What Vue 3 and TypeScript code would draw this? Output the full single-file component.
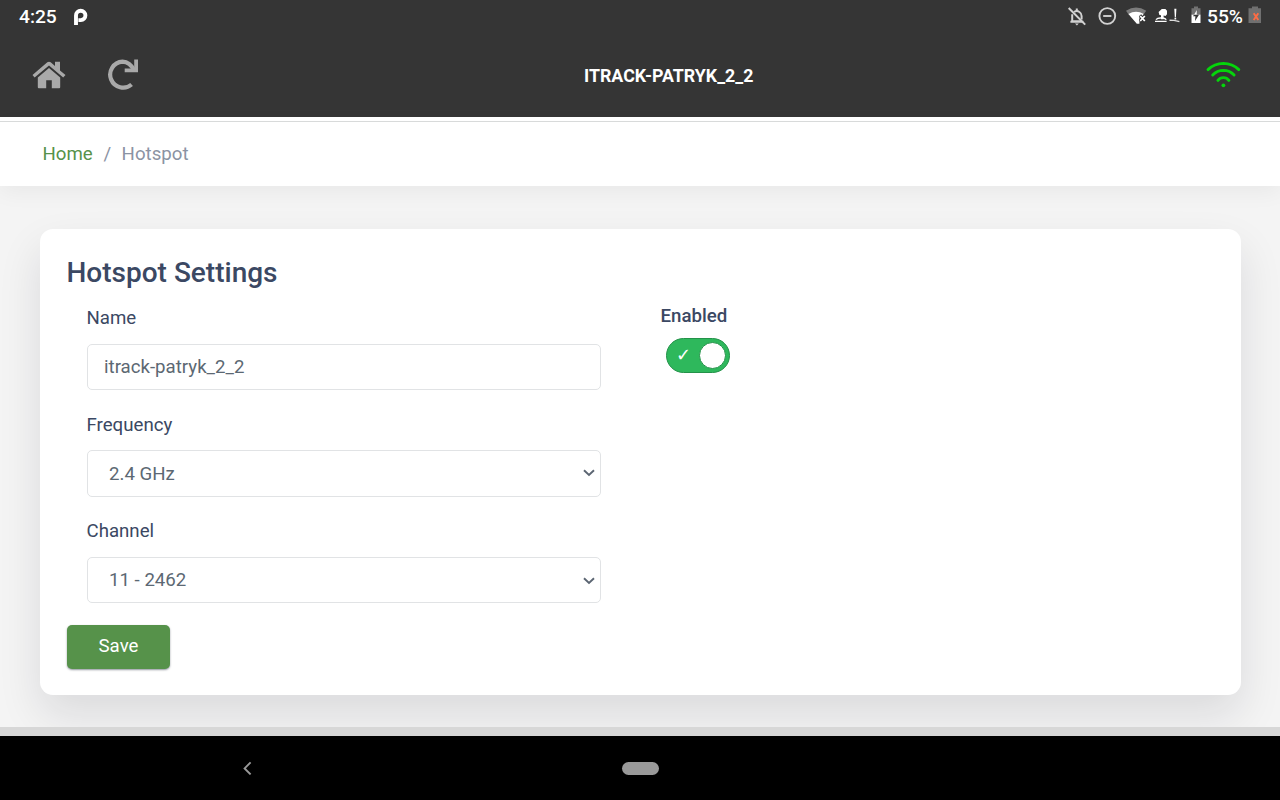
<script setup lang="ts">
import { ref } from 'vue'

const deviceName = 'ITRACK-PATRYK_2_2'

const name = ref('itrack-patryk_2_2')
const frequency = ref('2.4 GHz')
const channel = ref('11 - 2462')
const enabled = ref(true)

const frequencies = ['2.4 GHz', '5 GHz']
const channels = ['1 - 2412', '6 - 2437', '11 - 2462']
</script>

<template>
  <div class="screen">
    <header class="top">
      <div class="status">
        <span class="clock">4:25</span>
        <svg class="p-icon" width="16" height="20" viewBox="0 0 16 20">
          <path d="M4 18V8.4a4.7 4.7 0 1 1 4.8 4.7H6.4" fill="none" stroke="#fff" stroke-width="3.9" />
        </svg>
        <div class="indicators">
          <svg class="bell" width="20" height="20" viewBox="0 0 20 20" fill="none" stroke="#d2d2d2" stroke-width="2">
            <path d="M5.2 7.2V14.2H15M3.4 14.8H16.4M7.2 5Q9.7 3.1 12.4 5Q14.6 6.4 14.6 9V12.4M9.8 4V1.4" />
            <path d="M1.7 1L18.2 17.6" />
            <path d="M8 16.6h3.8l-1.9 2z" fill="#d2d2d2" stroke="none" />
          </svg>
          <svg class="dnd" width="20" height="20" viewBox="0 0 20 20" fill="none" stroke="#d2d2d2" stroke-width="1.9">
            <circle cx="10.3" cy="9" r="7.9" />
            <path d="M6.2 9h8.2" />
          </svg>
          <svg class="net" width="21" height="18" viewBox="0 0 21 18">
            <path d="M0 3.8Q10 -2.6 20.2 3.8L17.8 7.2H2.4Z" fill="#7c7c7c" />
            <path d="M2.4 7Q10 2.6 17.8 7L16.6 9H13.4V16.8H10.8Z" fill="#fff" />
            <path d="M14 8.2l5 6M19 8.2l-5 6" stroke="#353535" stroke-width="3" />
            <path d="M14.2 9l4.6 5M18.8 9l-4.6 5" stroke="#fff" stroke-width="1.8" />
          </svg>
          <svg class="signal" width="26" height="16" viewBox="0 0 26 16" fill="#fff">
            <path d="M3.6 4L6.8 1H10.4L12 2.8V6.2L10.5 8L8.6 7.4V11.2H6V7.2L4.4 7Z" />
            <path d="M1 11.6Q2.6 9.8 6 10M8 10Q10.4 10.2 11.2 11.8M0 13.4H11.6" fill="none" stroke="#fff" stroke-width="1.4" />
            <path d="M19.3.8h2.1l-.5 8.4h-1.1zM19.5 9.8h1.7v1.8h-1.7z" />
            <path d="M14.5 12.2L19 12.4L24.4 13.6" fill="none" stroke="#ddd" stroke-width="1.4" />
          </svg>
          <svg class="charging" width="10" height="18" viewBox="0 0 10 18">
            <path d="M.5 2.3H3V.5h4v1.8h2.5V9h-9z" fill="#727272" />
            <path d="M.5 8.7h9V17h-9z" fill="#fff" />
            <path d="M6.2 4L2 10.3h2.4L4 15l4-6.3H5.7z" fill="#353535" />
            <path d="M5.8 4L3 8.7h2.8z" fill="#fff" />
          </svg>
          <span class="percent">55%</span>
          <svg class="dead" width="14" height="18" viewBox="0 0 14 18">
            <path d="M.5 2.3H4V.5h6v1.8h3V17H.5z" fill="#707070" />
            <path d="M5.7 7.2l4.6 6.8M10.3 7.2L5.7 14" stroke="#ff6c43" stroke-width="1.9" />
          </svg>
        </div>
      </div>

      <nav class="toolbar">
        <div class="tools">
          <svg class="home" width="34" height="28" viewBox="0 0 34 28" fill="#a9a9a9">
            <path d="M.5 14.1L15.3 1.3Q17 0 18.7 1.3L23 5V.8H28V9.4L33.5 14.1L31.2 16.5L17 4.5L2.6 16.5Z" />
            <path d="M17 7L28.2 16.4V26.3Q28.2 27.3 27.2 27.3H19.8V19.3H14.2V27.3H6.8Q5.8 27.3 5.8 26.3V16.4Z" />
          </svg>
          <svg class="reload" width="32" height="32" viewBox="0 0 32 32">
            <path d="M27.2 11.3Q23 3 15.5 2.6A13 13 0 1 0 24.6 25.5" fill="none" stroke="#a9a9a9" stroke-width="4.2" />
            <path d="M27.2.5H31V13.3H17.7V9.4H27.2Z" fill="#a9a9a9" />
          </svg>
        </div>
        <h1 class="device">{{ deviceName }}</h1>
        <svg class="wifi" width="36" height="28" viewBox="0 0 36 28" fill="none" stroke="#05d50b" stroke-width="2.9" stroke-linecap="round">
          <path d="M3 8.6Q9.4 2.6 18.4 2.4Q27.4 2.6 33.8 8.6" />
          <path d="M7.7 14Q12.1 9.5 18.4 9.4Q24.7 9.5 29.1 14" />
          <path d="M12.9 19.4Q14.8 16.6 18.4 16.6Q22 16.6 23.9 19.4" />
          <circle cx="18.4" cy="24.3" r="1.9" fill="#05d50b" stroke="none" />
        </svg>
      </nav>
    </header>

    <div class="breadcrumb">
      <a class="crumb-link">Home</a>
      <span class="slash">/</span>
      <span>Hotspot</span>
    </div>

    <main class="content">
      <section class="card">
        <h2>Hotspot Settings</h2>
        <div class="columns">
          <div class="fields">
            <label class="field">
              <span class="caption">Name</span>
              <input v-model="name" class="control" type="text" />
            </label>
            <label class="field">
              <span class="caption">Frequency</span>
              <div class="select-wrap">
                <select v-model="frequency" class="control tall">
                  <option v-for="f in frequencies" :key="f">{{ f }}</option>
                </select>
                <svg class="chevron" width="12" height="8" viewBox="0 0 12 8">
                  <path d="M1 1.3l5 4.7 5-4.7" fill="none" stroke="#5b6572" stroke-width="1.9" />
                </svg>
              </div>
            </label>
            <label class="field">
              <span class="caption">Channel</span>
              <div class="select-wrap">
                <select v-model="channel" class="control">
                  <option v-for="c in channels" :key="c">{{ c }}</option>
                </select>
                <svg class="chevron" width="12" height="8" viewBox="0 0 12 8">
                  <path d="M1 1.3l5 4.7 5-4.7" fill="none" stroke="#5b6572" stroke-width="1.9" />
                </svg>
              </div>
            </label>
          </div>
          <div class="enabled">
            <span class="enabled-label">Enabled</span>
            <button class="switch" :class="{ on: enabled }" @click="enabled = !enabled">
              <span class="check">✓</span>
              <span class="knob"></span>
            </button>
          </div>
        </div>
        <button class="save">Save</button>
      </section>
    </main>

    <div class="page-footer"></div>
    <footer class="android-nav">
      <svg class="back" width="10" height="14" viewBox="0 0 10 14">
        <path d="M8.6 1.4L2.6 7.4l6 6" fill="none" stroke="#999" stroke-width="1.9" />
      </svg>
      <span class="pill"></span>
    </footer>
  </div>
</template>

<style>
body {
  margin: 0;
  overflow: hidden;
}
</style>

<style scoped>
.screen {
  display: flex;
  flex-direction: column;
  width: 1280px;
  height: 800px;
  overflow: hidden;
  background: #f4f4f4;
  font-family: Roboto, "Liberation Sans", sans-serif;
  font-size: 18.67px;
  color: #3b4863;
}
.screen * {
  box-sizing: border-box;
}
svg {
  display: block;
  flex: none;
}

/* header */
.top {
  height: 117px;
  flex: none;
  background: #353535;
  color: #fff;
}
.status {
  display: flex;
  align-items: center;
  height: 33px;
  padding: 0 18px 0 19px;
  font-size: 19.2px;
  font-weight: 500;
}
.p-icon {
  margin-left: 15px;
}
.indicators {
  display: flex;
  align-items: center;
  margin-left: auto;
}
.dnd {
  margin-left: 10px;
}
.net {
  margin-left: 9px;
  margin-bottom: 2px;
}
.signal {
  margin-left: 8px;
  margin-bottom: 2px;
}
.charging {
  margin-left: 10px;
  margin-bottom: 3px;
}
.percent {
  width: 37px;
  margin: 0 4px 0 6px;
}
.dead {
  margin-bottom: 3px;
}
.toolbar {
  display: grid;
  grid-template-columns: 553px 1fr 36px;
  align-items: center;
  height: 84px;
  padding: 0 39px 0 31px;
}
.tools {
  display: flex;
  align-items: center;
  gap: 41.5px;
}
.home {
  margin-left: 0.5px;
}
.reload {
  margin-top: -1px;
}
.device {
  margin: 0;
  font-size: 17.8px;
  font-weight: 700;
}

/* breadcrumb */
.breadcrumb {
  position: relative;
  display: flex;
  flex: none;
  align-items: center;
  height: 65px;
  margin-top: 4px;
  padding-left: 42.5px;
  border-top: 1px solid #d8dada;
  background: #fff;
  box-shadow: 0 -4px 0 #fff, 0 6px 22px rgba(0, 0, 0, 0.05);
  color: #8b93a3;
}
.crumb-link {
  color: #56924a;
}
.slash {
  margin: 0 10.5px 0 10.7px;
}

/* card */
.content {
  flex: 1;
  padding: 43px 39px 0 40px;
}
.card {
  height: 466px;
  padding: 27px 27px 25px 26.5px;
  border-radius: 13px;
  background: #fff;
  box-shadow: 0 20px 44px rgba(20, 20, 35, 0.11);
}
h2 {
  margin: 0;
  font-size: 28px;
  font-weight: 500;
  line-height: 34px;
}
.columns {
  display: flex;
  height: 309px;
  padding: 17px 0 0 20.5px;
}
.fields {
  width: 514px;
}
.field {
  display: block;
  height: 106.5px;
  line-height: 22px;
}
.caption {
  margin-left: -0.5px;
}
.control {
  display: block;
  width: 100%;
  height: 46px;
  margin-top: 15px;
  padding: 0 16px;
  border: 1px solid #e1e3e5;
  border-radius: 5px;
  background: #fff;
  color: #5c6873;
  font: inherit;
  outline: none;
}
select.control {
  appearance: none;
  padding-left: 21px;
}
.control.tall {
  height: 47px;
  margin-top: 14px;
  padding-top: 1px;
}
.select-wrap {
  position: relative;
}
.chevron {
  position: absolute;
  right: 6px;
  top: 19.5px;
}
.enabled {
  margin-left: 59.5px;
}
.enabled-label {
  display: block;
  line-height: 22px;
  margin: -2px 0 11px 0;
  font-weight: 500;
}
.switch {
  display: flex;
  align-items: center;
  width: 64px;
  height: 35px;
  margin-left: 5.5px;
  padding: 0 3.5px 0 9px;
  border: 1px solid #aaa;
  border-radius: 18px;
  background: #bbb;
}
.switch.on {
  border-color: #249249;
  background: #2eb85c;
}
.check {
  margin-bottom: 2px;
  color: #fff;
  font: 18px "DejaVu Sans", sans-serif;
}
.knob {
  width: 27px;
  height: 27px;
  margin-left: auto;
  border: 1px solid #249249;
  border-radius: 50%;
  background: #fff;
}
.save {
  display: block;
  width: 103px;
  height: 44px;
  margin: 26px 0 0 0.5px;
  padding: 0 0 2px;
  border: 0;
  border-radius: 5px;
  background: #56924a;
  box-shadow: 0 1px 2px rgba(40, 50, 65, 0.5);
  color: #fff;
  font: inherit;
}

/* bottom */
.page-footer {
  position: relative;
  height: 9px;
  flex: none;
  background: #d7d7d7;
}
.android-nav {
  position: relative;
  display: flex;
  flex: none;
  align-items: center;
  height: 64px;
  background: #000;
}
.back {
  margin-left: 242px;
}
.pill {
  width: 37px;
  height: 13px;
  margin-left: 370px;
  border-radius: 7px;
  background: #999;
}
</style>
